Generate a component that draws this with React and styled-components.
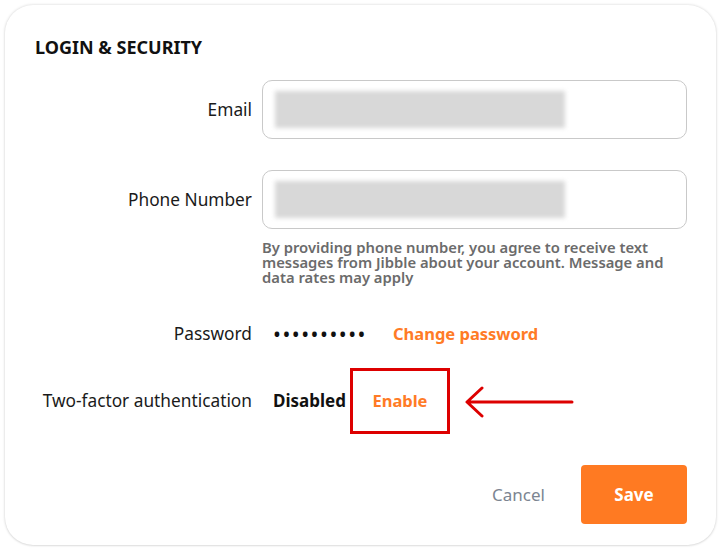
import React from "react";
import styled, { createGlobalStyle } from "styled-components";

const GlobalStyle = createGlobalStyle`
  html, body {
    margin: 0;
    padding: 0;
    background: #ffffff;
  }
  body {
    font-family: "Noto Sans", "Open Sans", sans-serif;
    color: #1f1f1f;
  }
`;

const Page = styled.div`
  padding: 5px;
  width: 721px;
  height: 550px;
  box-sizing: border-box;
`;

const Card = styled.div`
  box-sizing: border-box;
  width: 711px;
  height: 540px;
  border-radius: 28px;
  background: #fff;
  box-shadow: 0 0 3px rgba(0, 0, 0, 0.18), 0 1px 2px rgba(0, 0, 0, 0.06);
  padding: 32px 29px 21px 30px;
  display: flex;
  flex-direction: column;
`;

const Title = styled.h2`
  margin: 0;
  font-size: 18px;
  line-height: 20px;
  font-weight: 700;
  color: #111;
`;

const Row = styled.div`
  display: grid;
  grid-template-columns: 217px 1fr;
  column-gap: 10px;
  align-items: center;
  margin-top: ${(p) => p.$gap}px;
`;

const Label = styled.div`
  text-align: right;
  font-size: 17.3px;
  line-height: 20px;
  color: #1a1a1a;
  white-space: nowrap;
`;

const Field = styled.div`
  box-sizing: border-box;
  height: 59px;
  border: 1px solid #c9c9c9;
  border-radius: 10px;
  padding: 10px 12px;
  display: flex;
  align-items: center;
`;

const Redacted = styled.div`
  width: 290px;
  height: 37px;
  background: #d8d8d8;
  filter: blur(2px);
`;

const Hint = styled.p`
  grid-column: 2;
  margin: 11px 0 0;
  font-size: 14.8px;
  line-height: 15px;
  font-weight: 600;
  color: #6b6b6b;
  max-width: 420px;
`;

const Value = styled.div`
  display: flex;
  align-items: center;
  padding-left: 11px;
  min-height: 30px;
`;

const Dots = styled.span`
  font-size: 21px;
  line-height: 20px;
  letter-spacing: 1.5px;
  color: #111;
`;

const OrangeLink = styled.a`
  color: #ff7b26;
  font-weight: 700;
  font-size: 16.5px;
  line-height: 20px;
  text-decoration: none;
  margin-left: ${(p) => p.$offset || 0}px;
  cursor: pointer;
`;

const Status = styled.span`
  font-weight: 700;
  font-size: 17px;
  line-height: 20px;
  color: #111;
`;

const Highlight = styled.div`
  box-sizing: border-box;
  margin-left: 4px;
  width: 100px;
  height: 66px;
  border: 3px solid #dd0000;
  display: flex;
  align-items: center;
  justify-content: center;
`;

const Arrow = styled.svg`
  margin-left: 14px;
  margin-top: 2px;
`;

const Footer = styled.div`
  margin-top: 31px;
  display: flex;
  justify-content: flex-end;
  align-items: center;
  gap: 36px;
`;

const CancelButton = styled.button`
  background: none;
  border: none;
  padding: 0;
  font-family: inherit;
  font-size: 17px;
  line-height: 20px;
  color: #7c8591;
  cursor: pointer;
`;

const SaveButton = styled.button`
  width: 106px;
  height: 59px;
  border: none;
  border-radius: 4px;
  background: #ff7a22;
  color: #fff;
  font-family: inherit;
  font-size: 17px;
  font-weight: 700;
  cursor: pointer;
`;

const App = () => {
  return (
    <Page>
      <GlobalStyle />
      <Card>
        <Title>LOGIN &amp; SECURITY</Title>

        <Row $gap={23}>
          <Label>Email</Label>
          <Field>
            <Redacted />
          </Field>
        </Row>

        <Row $gap={31}>
          <Label>Phone Number</Label>
          <Field>
            <Redacted />
          </Field>
          <Hint>
            By providing phone number, you agree to receive text messages from
            Jibble about your account. Message and data rates may apply
          </Hint>
        </Row>

        <Row $gap={34}>
          <Label>Password</Label>
          <Value>
            <Dots>••••••••••</Dots>
            <OrangeLink $offset={26}>Change password</OrangeLink>
          </Value>
        </Row>

        <Row $gap={19}>
          <Label>Two-factor authentication</Label>
          <Value>
            <Status>Disabled</Status>
            <Highlight>
              <OrangeLink>Enable</OrangeLink>
            </Highlight>
            <Arrow width="110" height="34" viewBox="0 0 110 34">
              <path
                d="M108 17 H4 M18 3 L3 17 L18 31"
                fill="none"
                stroke="#dd0000"
                strokeWidth="3"
                strokeLinecap="round"
                strokeLinejoin="round"
              />
            </Arrow>
          </Value>
        </Row>

        <Footer>
          <CancelButton>Cancel</CancelButton>
          <SaveButton>Save</SaveButton>
        </Footer>
      </Card>
    </Page>
  );
};

export default App;
